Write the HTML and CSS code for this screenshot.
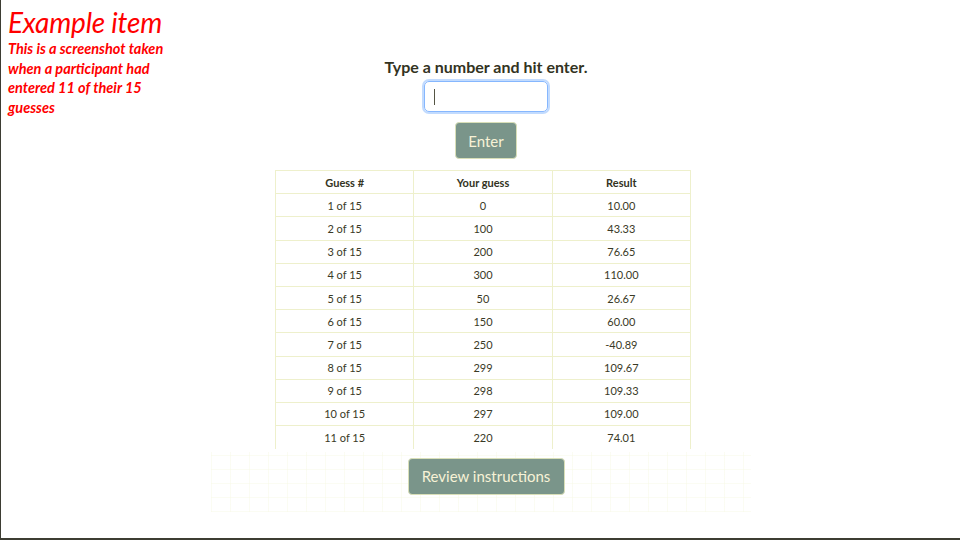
FILE: index.html
```html
<!DOCTYPE html>
<html>
<head>
<meta charset="utf-8">
<link rel="stylesheet" href="styles.css">
</head>
<body>
<div class="frame">
  <div class="note">
    <div class="note-title">Example item</div>
    <div class="note-text">This is a screenshot taken when a participant had entered 11 of their 15 guesses</div>
  </div>
  <main class="main">
    <h2 class="prompt">Type a number and hit enter.</h2>
    <div class="input"><span class="caret"></span></div>
    <button class="btn btn-enter">Enter</button>
    <table class="guesses">
      <thead>
        <tr><th>Guess #</th><th>Your guess</th><th>Result</th></tr>
      </thead>
      <tbody>
        <tr><td>1 of 15</td><td>0</td><td>10.00</td></tr>
        <tr><td>2 of 15</td><td>100</td><td>43.33</td></tr>
        <tr><td>3 of 15</td><td>200</td><td>76.65</td></tr>
        <tr><td>4 of 15</td><td>300</td><td>110.00</td></tr>
        <tr><td>5 of 15</td><td>50</td><td>26.67</td></tr>
        <tr><td>6 of 15</td><td>150</td><td>60.00</td></tr>
        <tr><td>7 of 15</td><td>250</td><td>-40.89</td></tr>
        <tr><td>8 of 15</td><td>299</td><td>109.67</td></tr>
        <tr><td>9 of 15</td><td>298</td><td>109.33</td></tr>
        <tr><td>10 of 15</td><td>297</td><td>109.00</td></tr>
        <tr class="last"><td>11 of 15</td><td>220</td><td>74.01</td></tr>
      </tbody>
    </table>
    <div class="footer">
      <button class="btn btn-review">Review instructions</button>
    </div>
  </main>
</div>
</body>
</html>
```
FILE: styles.css
```css
* { box-sizing: border-box; }
html, body { margin: 0; padding: 0; }
body {
  width: 960px;
  height: 540px;
  background: #fff;
  font-family: Lato, "Open Sans", sans-serif;
  color: #3a3a26;
  overflow: hidden;
}
.frame {
  position: relative;
  width: 960px;
  height: 540px;
  border-left: 1px solid #3d3d33;
  border-bottom: 2px solid #3d3d33;
}
.note {
  position: absolute;
  left: 7px;
  top: 5px;
  width: 172px;
  color: #ff0000;
  font-style: italic;
}
.note-title {
  font-size: 28px;
  line-height: 34px;
  letter-spacing: -0.2px;
}
.note-text {
  font-size: 14.5px;
  font-weight: 700;
  line-height: 19.5px;
  letter-spacing: 0;
}
.main {
  display: flex;
  flex-direction: column;
  align-items: center;
  padding-top: 56px;
  padding-left: 11px;
}
.prompt {
  margin: 0;
  font-size: 16px;
  line-height: 21px;
  font-weight: 700;
  color: #333322;
  letter-spacing: 0;
}
.input {
  margin-top: 4px;
  width: 124px;
  height: 31px;
  border: 1px solid #86b7fe;
  border-radius: 5px;
  box-shadow: 0 0 0 2px #c2dbfe;
  display: flex;
  align-items: center;
  padding-left: 9px;
}
.caret {
  width: 1px;
  height: 16px;
  background: #555544;
}
.btn {
  font-family: Lato, "Open Sans", sans-serif;
  background: #7a958a;
  color: #f7f2d6;
  border: 1px solid #d9dfb8;
  border-radius: 4px;
  font-size: 15px;
}
.btn-enter {
  margin-top: 10px;
  width: 62px;
  height: 37px;
}
.guesses {
  margin-top: 11px;
  margin-left: -6px;
  width: 416px;
  border-collapse: collapse;
  table-layout: fixed;
  font-size: 11px;
}
.guesses th, .guesses td {
  border: 1px solid #eef0cc;
  height: 23.2px;
  padding: 0;
  text-align: center;
  vertical-align: middle;
}
.guesses th { font-weight: 700; color: #333322; }
.guesses tr.last td { border-bottom: none; }
.footer {
  margin-top: 3px;
  margin-left: -11px;
  width: 540px;
  height: 60px;
  display: flex;
  justify-content: center;
  padding-top: 6px;
  padding-left: 11px;
  background-image:
    repeating-linear-gradient(90deg, rgba(246,248,228,0.45) 0 1px, transparent 1px 19px),
    repeating-linear-gradient(0deg, rgba(246,248,228,0.45) 0 1px, transparent 1px 14px);
}
.btn-review {
  width: 157px;
  height: 37px;
  font-size: 15px;
}
```
